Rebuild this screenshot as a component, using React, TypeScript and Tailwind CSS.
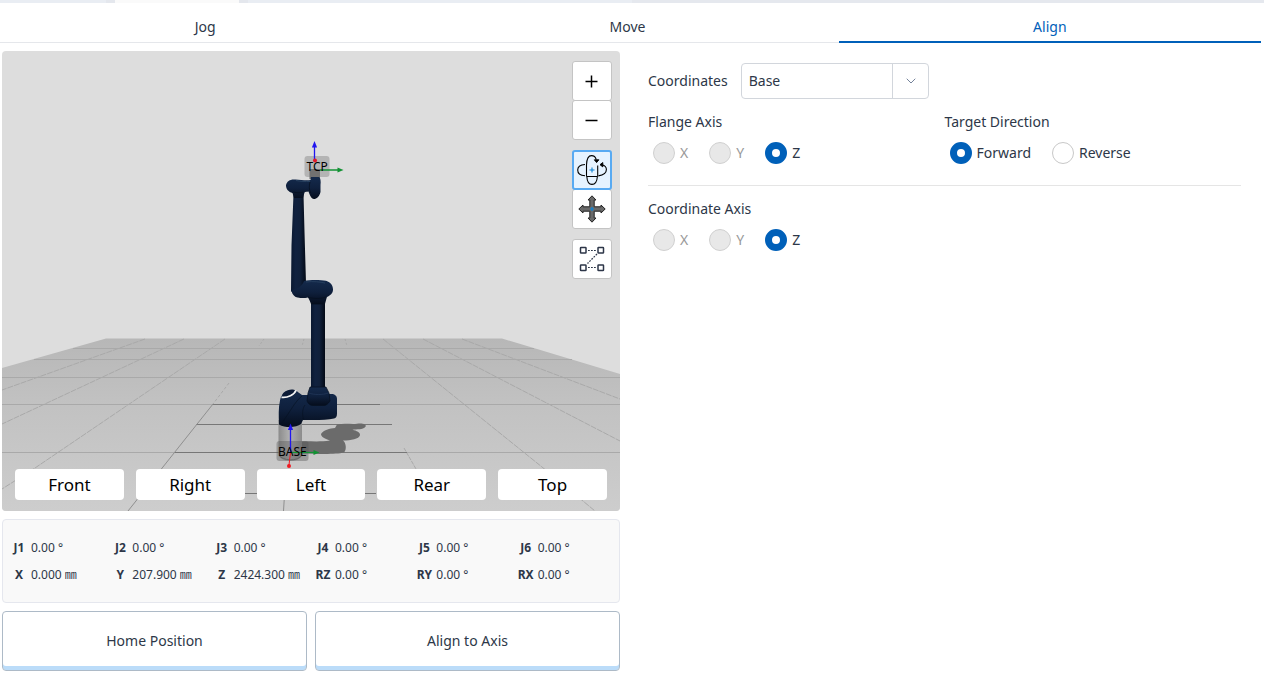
import React, { useState } from 'react';
import { ChevronDown } from 'lucide-react';

const tabs = ['Jog', 'Move', 'Align'];
const views = ['Front', 'Right', 'Left', 'Rear', 'Top'];

const joints = [
  { name: 'J1', value: '0.00 °' },
  { name: 'J2', value: '0.00 °' },
  { name: 'J3', value: '0.00 °' },
  { name: 'J4', value: '0.00 °' },
  { name: 'J5', value: '0.00 °' },
  { name: 'J6', value: '0.00 °' },
  { name: 'X', value: '0.000 ㎜' },
  { name: 'Y', value: '207.900 ㎜' },
  { name: 'Z', value: '2424.300 ㎜' },
  { name: 'RZ', value: '0.00 °' },
  { name: 'RY', value: '0.00 °' },
  { name: 'RX', value: '0.00 °' },
];

type Option = { label: string; disabled?: boolean };

const axes: Option[] = [{ label: 'X', disabled: true }, { label: 'Y', disabled: true }, { label: 'Z' }];
const directions: Option[] = [{ label: 'Forward' }, { label: 'Reverse' }];

function RadioGroup({ title, name, options, initial }: { title: string; name: string; options: Option[]; initial: string }) {
  const [value, setValue] = useState(initial);
  return (
    <fieldset>
      <legend className="leading-5">{title}</legend>
      <div className="flex gap-[21px] pl-[5px] pt-2.5">
        {options.map((o) => (
          <label key={o.label} className={`flex h-[22px] items-center gap-[5px] ${o.disabled ? 'text-[#999999]' : ''}`}>
            <input
              type="radio"
              name={name}
              checked={value === o.label}
              disabled={o.disabled}
              onChange={() => setValue(o.label)}
              className="size-[22px] appearance-none rounded-full border border-[#c8c8c8] bg-white checked:border-[7px] checked:border-[#0060b9] disabled:border-[#d0d0d0] disabled:bg-[#e8e8e8]"
            />
            {o.label}
          </label>
        ))}
      </div>
    </fieldset>
  );
}

function RotateIcon() {
  return (
    <svg width="30" height="30" viewBox="0 0 30 30" fill="none" stroke="#000" strokeWidth="1.1">
      <path d="M9.500 21.500V10C9.700 4 11.500.6 14.500.6c2.500 0 4 1.200 4.700 3.900" />
      <path d="M8 9.500C3 9.800.7 12 .7 15s2.300 5.500 7.300 5.700" />
      <path d="M25 9.800c3 .8 4.400 2.500 4.400 4.700 0 3-2.900 5.500-8 6.400" />
      <path d="M9.500 21.500H20.500M20.700 10.500v11" />
      <path d="M9.800 21.500c.3 5 2.200 7.900 5.200 7.900s5-2.900 5.400-7.900" />
      <path d="M17.300 4.800h4.600l-2.300 2.800zM25.800 7.500v4.400L23 9.700z" fill="#000" strokeWidth=".9" />
      <path d="M15 12.500v5M12.500 15h5" stroke="#0a7fd0" />
    </svg>
  );
}

function PanIcon() {
  return (
    <svg width="28" height="28" viewBox="0 0 28 28">
      <path
        d="M14 .8 18 5h-1.800v6.800H23V10l4.200 4-4.200 4v-1.800h-6.800V23H18l-4 4.200L10 23h1.800v-6.800H5V18L.8 14 5 10v1.800h6.800V5H10z"
        fill="#6a6a6a" stroke="#222" strokeWidth="1"
      />
      <path d="M14 12v4M12 14h4" stroke="#0a84d8" strokeWidth="1.200" />
    </svg>
  );
}

function PointsIcon() {
  return (
    <svg width="26" height="26" viewBox="0 0 26 26" fill="none" stroke="#2d3648">
      <g strokeWidth="1.500">
        <rect x="1.500" y="1.500" width="5.500" height="5.500" rx=".6" />
        <rect x="19" y="1.500" width="5.500" height="5.500" rx=".6" />
        <rect x="1.500" y="19" width="5.500" height="5.500" rx=".6" />
        <rect x="19" y="19" width="5.500" height="5.500" rx=".6" />
      </g>
      <path d="M9 4.500h9M9 21.500h9M18 8 8.500 17.500" strokeWidth="1.200" strokeDasharray="1.800 1.200" />
    </svg>
  );
}

function RobotScene() {
  return (
    <svg viewBox="2 51 618 460" preserveAspectRatio="xMidYMid slice" className="block size-full" role="img" aria-label="Robot">
      <defs>
        <linearGradient id="floor" x1="0" y1="0" x2="0" y2="1">
          <stop offset="0" stopColor="#b7b7b7" />
          <stop offset=".35" stopColor="#c1c1c1" />
          <stop offset="1" stopColor="#cdcdcd" />
        </linearGradient>
        <linearGradient id="tube" x1="0" y1="0" x2="1" y2="0">
          <stop offset="0" stopColor="#0a1830" />
          <stop offset=".3" stopColor="#10213f" />
          <stop offset=".6" stopColor="#10203b" />
          <stop offset="1" stopColor="#030915" />
        </linearGradient>
        <linearGradient id="joint" x1="0" y1="0" x2="0" y2="1">
          <stop offset="0" stopColor="#142a4c" />
          <stop offset=".5" stopColor="#0f203d" />
          <stop offset="1" stopColor="#050d1c" />
        </linearGradient>
        <linearGradient id="steel" x1="0" y1="0" x2="1" y2="0">
          <stop offset="0" stopColor="#8b8b8b" />
          <stop offset=".45" stopColor="#b0b0b0" />
          <stop offset="1" stopColor="#8c8c8c" />
        </linearGradient>
      </defs>

      <rect x="2" y="51" width="618" height="460" fill="#dddddd" />
      <path d="M2 368 106 338.500H502L620 374v137H2z" fill="url(#floor)" />

      {/* grid */}
      <g fill="none" stroke="#a9a9a9">
        <path d="M73 348.500H534M34 359.500H572M2 377.500H620M2 404.500H620M2 452.500H620" />
        <path d="M145 339 2 390M184 339 2 424M225 339 35 468 2 489M383 339 542 467 595 511M423 339 620 441M462 339 620 399" strokeDasharray="6 1" />
        <path d="m264 339-5 7M304 339l-2 7M345 339l2 7" strokeDasharray="2 2" />
        <path d="m229 383-16 21" strokeDasharray="3 2" />
        <path d="m404 448 12 21" strokeDasharray="4 1" />
      </g>
      <g fill="none" stroke="#777777">
        <path d="M212 404.500H380M196 424.500H392M174 452.500H407M245 493.500H376" />
        <path d="m213 404-85 107M284.500 495l-1 16" stroke="#8f8f8f" />
      </g>

      {/* shadow */}
      <path d="M337 424.500c8-1.500 14 0 20-.7 6-.8 10 1 8.500 3-2.500 3-9 2.500-13 3 4 1 8 2.500 7.500 5.500-1 4-9 5-17 5.300 3 2 4 9 1 12-8 2-25 1.500-41 .9l-2-12c7-.6 18 .8 29-.9-6-2-9-4-9-6.500 2-4 9-6 14-6.200z" fill="#6b6b6b" />

      {/* base */}
      <path d="M278.500 420H302v34c0 4-5 7-11.500 7s-12-3-12-7z" fill="url(#steel)" />
      <path d="M279 455c3 6 19 7 23 0" fill="none" stroke="#6f6f6f" />
      <path d="M302 395h12v-1h17c4 0 6 2 6 5v14.500c0 3-1 4.500-3 5-8 2-21 1.500-31 1.500l-2 4c-5 4-16 4-22 .4-.3-9-.7-16 1-24 1-6 6-10.500 12.500-10.500 3 0 4.500 1 6 2.500z" fill="url(#joint)" />
      <path d="M302 396c-7 5-13 18-21 28M305 405c-3 4-3 11-1 15" fill="none" stroke="#06101f" strokeWidth=".8" opacity=".7" />
      <ellipse cx="289" cy="393.500" rx="7" ry="3.500" fill="#0d1c37" transform="rotate(-18 289 393.500)" />
      <path d="M281.500 397.300c6 .8 13-2.500 14.500-7" fill="none" stroke="#f5f5f5" strokeWidth="1.800" />

      {/* lower arm */}
      <path d="M311 300h14v92h-14z" fill="url(#tube)" />
      <path d="M310 387h16l3 6 1 8c-2 3-4 4.500-6 4.500h-11c-3 0-5-2-6-4.500l1-8z" fill="url(#joint)" stroke="#06101f" strokeWidth=".7" />
      <path d="M308.500 393c6 2 14 2 20 0" fill="none" stroke="#24395b" strokeWidth=".7" />

      {/* elbow and upper arm */}
      <path d="M293.500 194h10l1 38 1.500 51-1 15-9-1-5-6 .5-46z" fill="url(#tube)" />
      <path d="M304 281c7-1.500 17-1 22-.2 5 1.500 7 5 7 8.700 0 4-3 6-6 7.500-1 3-1.500 5-2 7h-14c-1-3-2-5-3-6.500-5 1-10 .5-13-1-2-1.500-3.500-4-3.500-6.500 6-1 10.500-3.500 12.500-9z" fill="url(#joint)" />
      <path d="M308 297c5 2 13 2 18 0M311 304h14" fill="none" stroke="#06101f" strokeWidth=".8" />
      <path d="M306 282c8-1 14 0 19 1" fill="none" stroke="#27405f" strokeWidth=".9" />

      {/* wrist */}
      <path d="M309.500 169H320v10h-10.500z" fill="#6d6d6d" />
      <path d="M311 177h8c1.500 1 2 4 1.500 8v7c-1 4.500-4 7-6.500 7-3-.5-4-3.500-5.500-7.500-2 .2-3 .2-4 1l-1.500 5.500h-9l-1.500-5c-4-1-6.500-4-6.500-7.500.5-4 4-6 7.500-6 6-.5 11 1.500 17 .5z" fill="url(#joint)" />
      <path d="M296 180.500c5 1 9 1 14 1" fill="none" stroke="#27405f" />
      <path d="M293.500 192c3 1 7 1 10 0M310 182c-1 4-1 7 .5 11" fill="none" stroke="#06101f" strokeWidth=".8" />

      {/* tool frame */}
      <rect x="304.500" y="156" width="25" height="21" rx="3" fill="#777" opacity=".4" />
      <path d="M314.500 160v-14" stroke="#2015f0" strokeWidth="1.300" />
      <path d="m314.500 141 2.600 6.500h-5.200z" fill="#2015f0" />
      <path d="M320 170h19" stroke="#129233" strokeWidth="1.300" />
      <path d="m343.500 170-6 2.600v-5.200z" fill="#129233" />
      <circle cx="315" cy="160.500" r="2" fill="#e3182c" />
      <text x="306.500" y="171" fontSize="12" fill="#000">TCP</text>

      {/* base frame */}
      <rect x="276.500" y="441" width="32" height="20" rx="3" fill="#555" opacity=".4" />
      <path d="M290.500 452v-23" stroke="#2015f0" strokeWidth="1.300" />
      <path d="m290.500 423.500 2.600 6.500h-5.200z" fill="#2015f0" />
      <path d="M290.500 452.500H315" stroke="#129233" strokeWidth="1.200" />
      <path d="m319.500 452.500-6 2.500v-5z" fill="#129233" />
      <path d="m290.500 452-1.500 13" stroke="#f01a22" />
      <circle cx="289" cy="466" r="2" fill="#f01a22" />
      <text x="278" y="456" fontSize="12" fill="#000">BASE</text>
    </svg>
  );
}

export default function App() {
  const [tab, setTab] = useState('Align');
  const [mode, setMode] = useState('rotate');
  const tool = 'flex size-10 items-center justify-center rounded-[3px]';
  const idle = 'border border-[#c4c4c4] bg-white';
  const active = 'z-10 border-2 border-[#58aaf2] bg-[#e6f3ff]';

  return (
    <div className="overflow-hidden bg-white font-['Noto_Sans','Noto_Sans_CJK_KR',sans-serif] text-sm text-[#2d3748] antialiased">
      <div className="flex h-[3px] bg-[#e9edf3]">
        <div className="w-[106px]" />
        <div className="w-[9px] bg-[#e4e7ed]" />
        <div className="w-[124px] bg-[#fafafa]" />
        <div className="w-[9px] bg-[#e4e7ed]" />
        <div className="flex-1" />
        <div className="w-1/2 bg-[#e5e8ee]" />
      </div>

      {/* TABS */}
      <nav className="-ml-1.5 mr-[3px] grid h-10 grid-cols-3">
        {tabs.map((t) => (
          <button
            key={t}
            onClick={() => setTab(t)}
            className={`h-10 pt-2 leading-8 ${tab === t ? 'text-[#0060b9] shadow-[inset_0_-2px_0_#0060b9]' : 'shadow-[inset_0_-1px_0_#e5e7eb]'}`}
          >
            {t}
          </button>
        ))}
      </nav>

      <main className="grid grid-cols-[618fr_644fr] pl-0.5 pt-2">
        <section className="flex flex-col gap-2">
          {/* 3D VIEW */}
          <div className="relative h-[460px] overflow-hidden rounded">
            <RobotScene />
            <div className="absolute right-2 top-2.5 flex flex-col gap-2.5">
              <div>
                <button aria-label="Zoom in" className={`${tool} ${idle}`}>
                  <svg width="14" height="14" viewBox="0 0 14 14"><path d="M.5 7.500h12M6.500 1.500v12" stroke="#000" strokeWidth="1.500" /></svg>
                </button>
                <button aria-label="Zoom out" className={`${tool} ${idle} -mt-px`}>
                  <svg width="14" height="14" viewBox="0 0 14 14"><path d="M.5 7.500h12" stroke="#000" strokeWidth="1.500" /></svg>
                </button>
              </div>
              <div>
                <button aria-label="Rotate" onClick={() => setMode('rotate')} className={`${tool} relative ${mode === 'rotate' ? active : idle}`}>
                  <RotateIcon />
                </button>
                <button aria-label="Pan" onClick={() => setMode('pan')} className={`${tool} relative -mt-px ${mode === 'pan' ? active : idle}`}>
                  <PanIcon />
                </button>
              </div>
              <button aria-label="Show path" className={`${tool} ${idle}`}>
                <PointsIcon />
              </button>
            </div>
            <div className="absolute inset-x-[13px] bottom-[11px] grid grid-cols-5 gap-3">
              {views.map((v) => (
                <button key={v} className="h-[31px] rounded-sm bg-white text-[17px] leading-none text-black">{v}</button>
              ))}
            </div>
          </div>

          {/* POSITION */}
          <dl className="grid h-[84px] grid-cols-6 content-start rounded border border-[#e5e7ee] bg-[#f9f9f9] px-1 pt-3.5 text-xs leading-[27px]">
            {joints.map((j) => (
              <div key={j.name} className="flex whitespace-nowrap">
                <dt className="flex w-6 justify-center font-bold">{j.name}</dt>
                <dd>{j.value}</dd>
              </div>
            ))}
          </dl>

          <div className="grid grid-cols-2 gap-2">
            {['Home Position', 'Align to Axis'].map((label) => (
              <button key={label} className="h-[60px] rounded border border-[#adbac7] bg-white shadow-[inset_0_-4px_0_#bbdcf9]">
                {label}
              </button>
            ))}
          </div>
        </section>

        {/* ALIGN SETTINGS */}
        <section className="pl-7 pr-[23px] pt-3">
          <div className="flex items-center gap-[13px]">
            <label htmlFor="coordinates">Coordinates</label>
            <div className="relative w-[188px]">
              <select id="coordinates" className="h-9 w-full appearance-none rounded border border-[#d2d6dc] bg-white pl-[7px] pr-10">
                <option>Base</option>
                <option>World</option>
              </select>
              <span className="pointer-events-none absolute inset-y-0 right-0 flex w-[37px] items-center justify-center border-l border-[#d2d6dc]">
                <ChevronDown size={16} strokeWidth={1.5} className="text-[#74829a]" />
              </span>
            </div>
          </div>

          <div className="mt-[13px] grid grid-cols-2 border-b border-[#e5e5e5] pb-[21px]">
            <RadioGroup title="Flange Axis" name="flange" options={axes} initial="Z" />
            <RadioGroup title="Target Direction" name="direction" options={directions} initial="Forward" />
          </div>
          <div className="pt-[13px]">
            <RadioGroup title="Coordinate Axis" name="axis" options={axes} initial="Z" />
          </div>
        </section>
      </main>
    </div>
  );
}
